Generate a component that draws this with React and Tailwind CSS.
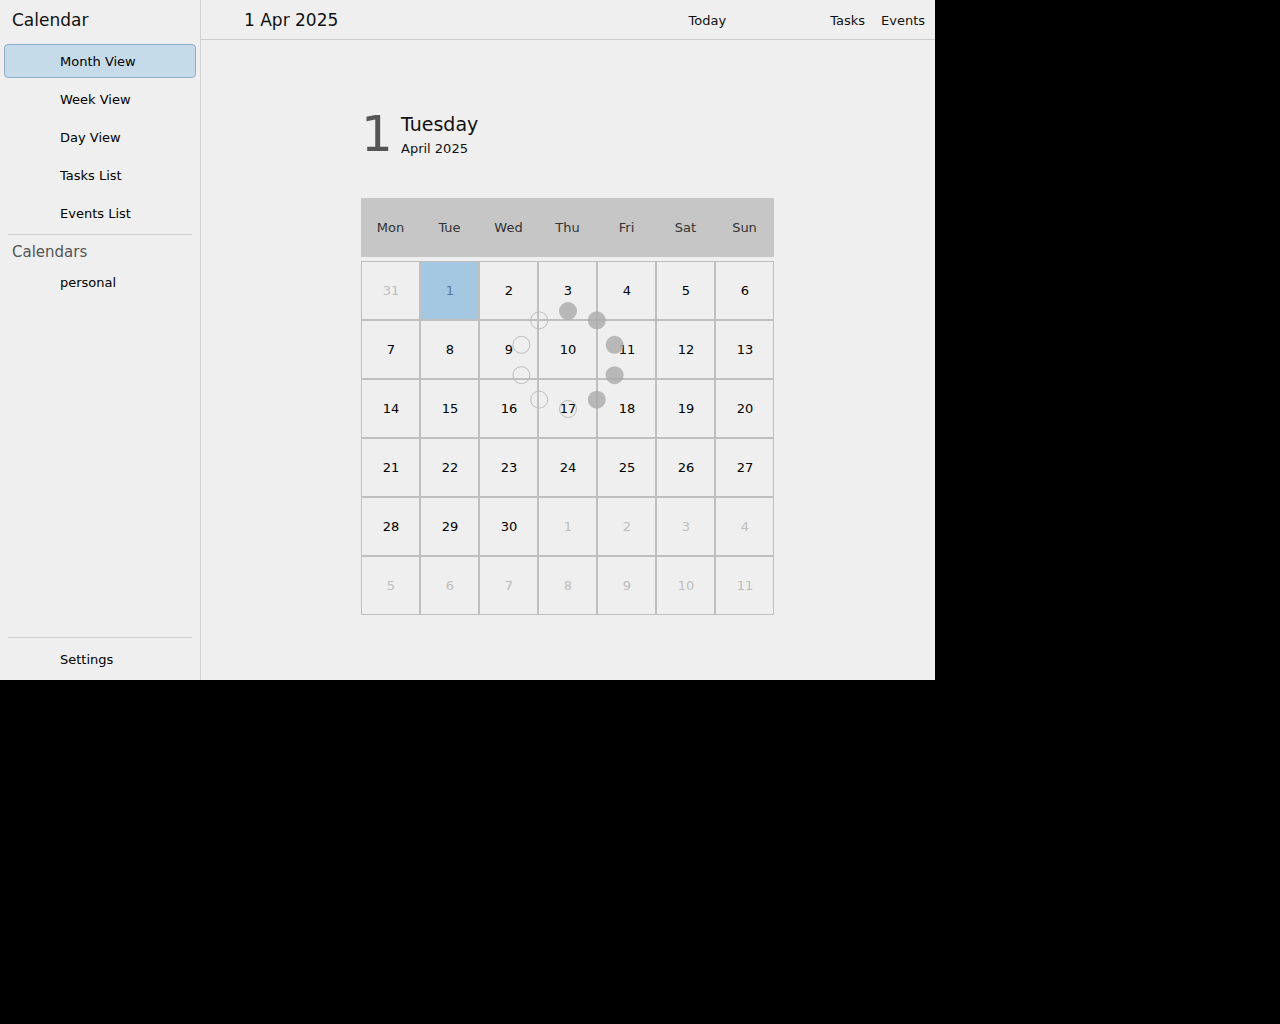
import React from "react";

const navItems = ["Month View", "Week View", "Day View", "Tasks List", "Events List"];
const weekDays = ["Mon", "Tue", "Wed", "Thu", "Fri", "Sat", "Sun"];

function buildWeeks() {
  const days = [{ n: 31, muted: true }];
  for (let d = 1; d <= 30; d++) days.push({ n: d, today: d === 1 });
  for (let d = 1; d <= 11; d++) days.push({ n: d, muted: true });
  const weeks = [];
  for (let i = 0; i < days.length; i += 7) weeks.push(days.slice(i, i + 7));
  return weeks;
}

function SideItem({ label, active }) {
  return (
    <div
      className={
        "h-[34px] mx-[4px] flex items-center pl-[55px] pt-[2px] text-[13px] text-black rounded-[4px] border " +
        (active ? "bg-[#c6dbea] border-[#8db1cb]" : "border-transparent")
      }
    >
      {label}
    </div>
  );
}

function Spinner() {
  const dots = [];
  for (let i = 0; i < 10; i++) {
    const a = (-90 + i * 36) * (Math.PI / 180);
    const cx = 60 + 49 * Math.cos(a);
    const cy = 60 + 49 * Math.sin(a);
    const filled = i < 5;
    dots.push(
      <circle
        key={i}
        cx={cx}
        cy={cy}
        r={filled ? 9 : 8.5}
        fill={filled ? "rgba(170,170,170,0.8)" : "none"}
        stroke={filled ? "none" : "#bdbdbd"}
        strokeWidth="1"
      />
    );
  }
  return (
    <svg
      width="120"
      height="120"
      viewBox="0 0 120 120"
      className="absolute left-[146.5px] top-[101.5px] pointer-events-none"
    >
      {dots}
    </svg>
  );
}

export default function App() {
  const weeks = buildWeeks();
  return (
    <div className="min-h-[1024px] bg-black" style={{ fontFamily: '"DejaVu Sans", sans-serif' }}>
      <div className="w-[935px] h-[680px] bg-[#efefef] flex">
        <aside className="w-[201px] border-r border-[#d2d2d2] flex flex-col">
          <div className="h-[40px] flex items-center pl-[12px] pt-[2px] text-[17px] text-[#111]">Calendar</div>
          <div className="mt-[4px] flex flex-col gap-[4px]">
            {navItems.map((l, i) => (
              <SideItem key={l} label={l} active={i === 0} />
            ))}
          </div>
          <div className="mx-[8px] mt-[4px] border-t border-[#cfcfcf]" />
          <div className="pl-[12px] pt-[2px] h-[32px] flex items-center text-[15px] text-[#555]">Calendars</div>
          <div className="-mt-[2px]">
            <SideItem label="personal" />
          </div>
          <div className="mt-auto mx-[8px] border-t border-[#cfcfcf]" />
          <div className="mt-[4px] mb-[4px]">
            <SideItem label="Settings" />
          </div>
        </aside>

        <main className="flex-1 flex flex-col">
          <header className="h-[40px] border-b border-[#cdcdcd] flex items-center pt-[2px] text-[#111]">
            <div className="pl-[43px] text-[17px]">1 Apr 2025</div>
            <div className="ml-auto flex items-center text-[13px] pr-[10px]">
              <span>Today</span>
              <span className="ml-[104px]">Tasks</span>
              <span className="ml-[16px]">Events</span>
            </div>
          </header>

          <div className="flex pl-[160px]">
            <div className="w-[413px] pt-[63px]">
              <div className="flex items-center h-[62px]">
                <div className="text-[50px] leading-none text-[#555] w-[40px]">1</div>
                <div className="flex flex-col pt-[1px]">
                  <div className="text-[19px] leading-[26px] text-[#111]">Tuesday</div>
                  <div className="mt-[3px] text-[13px] leading-[18px] text-[#111]">April 2025</div>
                </div>
              </div>

              <div className="relative mt-[33px]">
                <div className="grid grid-cols-7 h-[59px] bg-[#c6c6c6] text-[13px] text-[#333]">
                  {weekDays.map((d) => (
                    <div key={d} className="flex items-center justify-center">
                      {d}
                    </div>
                  ))}
                </div>
                <div className="mt-[4px] flex flex-col">
                  {weeks.map((w, wi) => (
                    <div key={wi} className="grid grid-cols-7">
                      {w.map((d, di) => (
                        <div
                          key={di}
                          className={
                            "h-[59px] border border-[#bfbfbf] flex items-center justify-center pl-[1px] text-[13px] " +
                            (d.today
                              ? "bg-[#a4c8e2] text-[#56788f]"
                              : d.muted
                              ? "text-[#bdbdbd]"
                              : "text-black")
                          }
                        >
                          {d.n}
                        </div>
                      ))}
                    </div>
                  ))}
                </div>
                <Spinner />
              </div>
            </div>
          </div>
        </main>
      </div>
    </div>
  );
}
